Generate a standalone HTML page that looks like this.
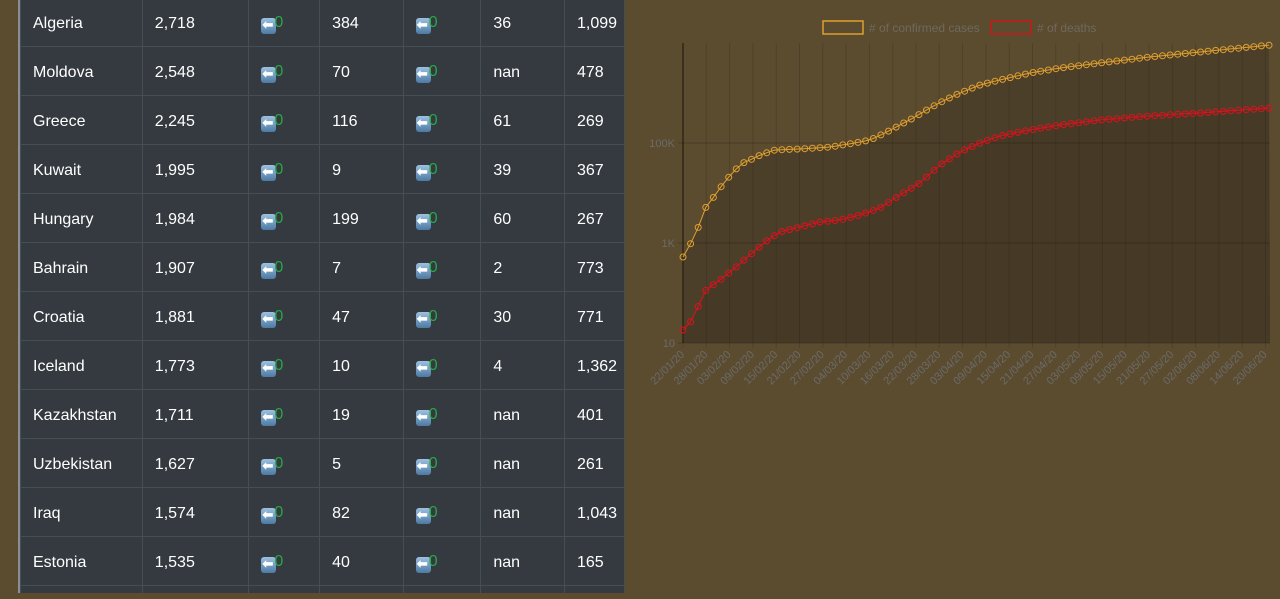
<!DOCTYPE html>
<html><head><meta charset="utf-8"><style>
html,body{margin:0;width:1280px;height:599px;overflow:hidden}
body{background:#5b4b2f;font-family:"Liberation Sans",Arial,sans-serif;position:relative}
.tbl{position:absolute;left:19px;top:0;width:606px;height:593px;background:#343a40;overflow:hidden}
.lb{position:absolute;left:18px;top:0;width:2px;height:593px;background:#8a8f96}
table{position:absolute;left:1px;top:-3px;border-collapse:collapse;color:#fff;font-size:16px}
td{height:49px;border:1px solid #454d55;padding:3px 0 0 12px;box-sizing:border-box}
tr.last td{height:10px;padding:0}
.ic{display:inline-block;width:15px;height:16px;background:linear-gradient(#9cc0e0,#4d7aa3);border-radius:3px;vertical-align:-2px;color:#fff;font-size:13px;font-weight:bold;line-height:14px;text-align:left;text-indent:1px}
.g{color:#28a745;margin-left:-2px}
</style></head><body>
<div class="tbl"><table>
<colgroup><col style="width:122px"><col style="width:107px"><col style="width:71px"><col style="width:84px"><col style="width:78px"><col style="width:84px"><col style="width:60px"></colgroup>
<tbody id="tb"></tbody></table></div>
<div class="lb"></div>
<svg id="ch" width="1280" height="599" style="position:absolute;left:0;top:0"></svg>
<script>
var rows=[["Algeria","2,718","384","36","1,099"],["Moldova","2,548","70","nan","478"],["Greece","2,245","116","61","269"],["Kuwait","1,995","9","39","367"],["Hungary","1,984","199","60","267"],["Bahrain","1,907","7","2","773"],["Croatia","1,881","47","30","771"],["Iceland","1,773","10","4","1,362"],["Kazakhstan","1,711","19","nan","401"],["Uzbekistan","1,627","5","nan","261"],["Iraq","1,574","82","nan","1,043"],["Estonia","1,535","40","nan","165"]];
var ic='<span class="ic">&#11013;</span><span class="g">0</span>';
var h='';rows.forEach(function(r){h+='<tr><td>'+r[0]+'</td><td>'+r[1]+'</td><td>'+ic+'</td><td>'+r[2]+'</td><td>'+ic+'</td><td>'+r[3]+'</td><td>'+r[4]+'</td></tr>';});
h+='<tr class="last"><td></td><td></td><td></td><td></td><td></td><td></td><td></td></tr>';
document.getElementById('tb').innerHTML=h;
var s='';var L=683,R=1270,T=43,B=343;
var N=78,dx=(R-L-1)/(N-1);
function pts(k){var p=[];for(var n=0;n<N;n++){var x=L+n*dx;var i=0;while(i<k.length-2&&k[i+1][0]<x)i++;var a=k[i],b=k[i+1];p.push([x,a[1]+(b[1]-a[1])*(x-a[0])/(b[0]-a[0])]);}return p;}
var cp=pts([[683,257],[690,245],[698,228],[706,207],[713,198],[720,188],[728,178],[735,170],[743,163],[750,160],[758,156],[766,153],[775,150],[800,149],[830,147],[855,143],[870,140],[885,133],[900,125],[915,117],[930,108],[945,100],[960,93],[980,85],[1000,80],[1030,73],[1060,68],[1100,63],[1150,57],[1200,52],[1271,45]]);
var dp=pts([[683,330],[690,323],[698,307],[706,290],[713,285],[720,280],[735,268],[750,255],[765,242],[780,232],[800,227],[820,222],[840,220],[860,215],[880,208],[900,195],[920,183],[940,165],[960,152],[980,143],[1000,136],[1030,130],[1060,125],[1100,120],[1150,116],[1200,113],[1271,108]]);
function ps(p){return p.map(function(q){return q[0].toFixed(1)+','+q[1].toFixed(1)}).join(' ');}
s+='<polygon points="'+L+','+B+' '+ps(cp)+' '+R+','+B+'" fill="#4c3f29"/>';
s+='<polygon points="'+L+','+B+' '+ps(dp)+' '+R+','+B+'" fill="#463a26"/>';
var lbls=["22/01/20","28/01/20","03/02/20","09/02/20","15/02/20","21/02/20","27/02/20","04/03/20","10/03/20","16/03/20","22/03/20","28/03/20","03/04/20","09/04/20","15/04/20","21/04/20","27/04/20","03/05/20","09/05/20","15/05/20","21/05/20","27/05/20","02/06/20","08/06/20","14/06/20","20/06/20"];
var gx=23.3;
for(var k=0;k<26;k++){var x=L+k*gx;s+='<line x1="'+x+'" y1="'+T+'" x2="'+x+'" y2="'+(B+5)+'" stroke="#000" stroke-opacity="0.12" stroke-width="1"/>';
s+='<text x="'+(x+2)+'" y="'+(B+12)+'" transform="rotate(-45 '+(x+2)+' '+(B+12)+')" text-anchor="end" font-size="11" fill="#6b6b6b">'+lbls[k]+'</text>';}
s+='<line x1="'+L+'" y1="'+T+'" x2="'+L+'" y2="'+B+'" stroke="#2e2617" stroke-width="1.5"/>';
[[143,"100K"],[243,"1K"],[343,"10"]].forEach(function(a){s+='<line x1="'+(L-5)+'" y1="'+a[0]+'" x2="'+R+'" y2="'+a[0]+'" stroke="#000" stroke-opacity="0.2"/><text x="'+(L-8)+'" y="'+(a[0]+4)+'" text-anchor="end" font-size="11" fill="#6b6b6b">'+a[1]+'</text>';});
function draw(p,col){s+='<polyline fill="none" stroke="'+col+'" stroke-width="1" points="'+ps(p)+'"/>';
p.forEach(function(q){s+='<circle cx="'+q[0].toFixed(1)+'" cy="'+q[1].toFixed(1)+'" r="3" fill="none" stroke="'+col+'" stroke-width="1"/>';});}
draw(cp,"#e0a030");draw(dp,"#e0101c");
s+='<rect x="823" y="21" width="40" height="13" fill="#5b4b2f" stroke="#e0a030" stroke-width="1.5"/><text x="869" y="32" font-size="12" fill="#6e6a5e">#&#160;of confirmed cases</text>';
s+='<rect x="991" y="21" width="40" height="13" fill="#5b4b2f" stroke="#c81a1a" stroke-width="1.5"/><text x="1037" y="32" font-size="12" fill="#6e6a5e">#&#160;of deaths</text>';
document.getElementById('ch').innerHTML=s;
</script>
</body></html>
